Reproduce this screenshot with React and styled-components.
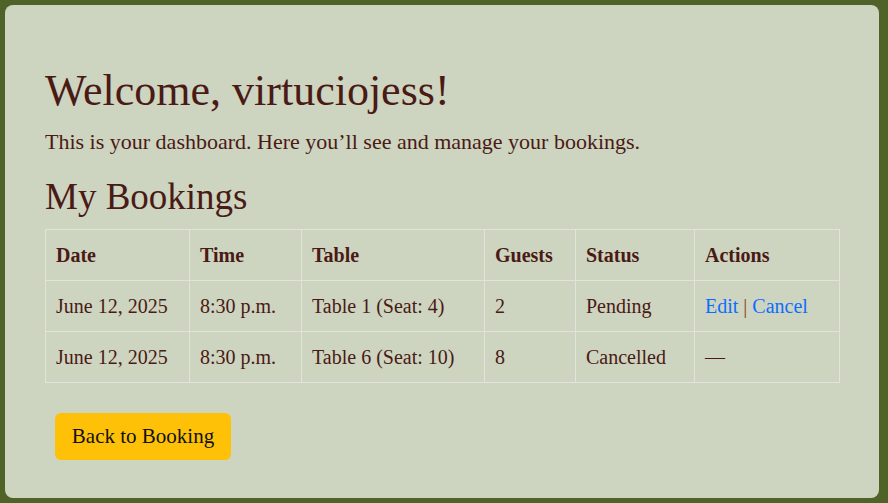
import styled, { createGlobalStyle } from "styled-components";

const Global = createGlobalStyle`
  html, body {
    margin: 0;
    height: 100%;
    background: #4f6228;
  }
  body {
    padding: 5px 9px 5px 5px;
    box-sizing: border-box;
    font-family: "Liberation Serif", "DejaVu Serif", serif;
    color: #4a1a14;
  }
  #root {
    height: 100%;
  }
`;

const Card = styled.main`
  height: 100%;
  box-sizing: border-box;
  background: #cdd4c0;
  border-radius: 8px;
  padding: 62px 40px 40px;
`;

const Title = styled.h1`
  margin: 0 0 13px;
  font-size: 44px;
  font-weight: 400;
  line-height: 1.1;
`;

const Intro = styled.p`
  margin: 0 0 18px;
  font-size: 22px;
  line-height: 1.3;
`;

const Subtitle = styled.h2`
  margin: 0 0 10px;
  font-size: 37px;
  font-weight: 400;
  line-height: 1.2;
`;

const Table = styled.table`
  width: 795px;
  table-layout: fixed;
  border-collapse: collapse;
  font-size: 20px;
`;

const Th = styled.th`
  text-align: left;
  font-weight: 700;
  height: 50px;
  padding: 0 10px;
  border: 1px solid #e2e4dc;
`;

const Td = styled.td`
  height: 50px;
  padding: 0 10px;
  border: 1px solid #e2e4dc;
  white-space: nowrap;
`;

const ActionLink = styled.a`
  color: #0d6efd;
  text-decoration: none;
`;

const Sep = styled.span`
  color: #8b4513;
`;

const BackButton = styled.button`
  display: block;
  margin: 30px 0 0 10px;
  background: #ffc107;
  border: none;
  border-radius: 6px;
  padding: 0 16px;
  width: 176px;
  height: 47px;
  font-family: inherit;
  font-size: 21px;
  color: #111;
`;

const columns = [
  { label: "Date", width: 144 },
  { label: "Time", width: 112 },
  { label: "Table", width: 183 },
  { label: "Guests", width: 91 },
  { label: "Status", width: 119 },
  { label: "Actions", width: 145 },
];

const bookings = [
  { date: "June 12, 2025", time: "8:30 p.m.", table: "Table 1 (Seat: 4)", guests: 2, status: "Pending", editable: true },
  { date: "June 12, 2025", time: "8:30 p.m.", table: "Table 6 (Seat: 10)", guests: 8, status: "Cancelled", editable: false },
];

export default function App() {
  return (
    <>
      <Global />
      <Card>
        <Title>Welcome, virtuciojess!</Title>
        <Intro>This is your dashboard. Here you’ll see and manage your bookings.</Intro>
        <Subtitle>My Bookings</Subtitle>
        <Table>
          <colgroup>
            {columns.map((c) => (
              <col key={c.label} style={{ width: c.width }} />
            ))}
          </colgroup>
          <thead>
            <tr>
              {columns.map((c) => (
                <Th key={c.label}>{c.label}</Th>
              ))}
            </tr>
          </thead>
          <tbody>
            {bookings.map((b, i) => (
              <tr key={i}>
                <Td>{b.date}</Td>
                <Td>{b.time}</Td>
                <Td>{b.table}</Td>
                <Td>{b.guests}</Td>
                <Td>{b.status}</Td>
                <Td>
                  {b.editable ? (
                    <>
                      <ActionLink href="#">Edit</ActionLink> <Sep>|</Sep>{" "}
                      <ActionLink href="#">Cancel</ActionLink>
                    </>
                  ) : (
                    "—"
                  )}
                </Td>
              </tr>
            ))}
          </tbody>
        </Table>
        <BackButton>Back to Booking</BackButton>
      </Card>
    </>
  );
}
